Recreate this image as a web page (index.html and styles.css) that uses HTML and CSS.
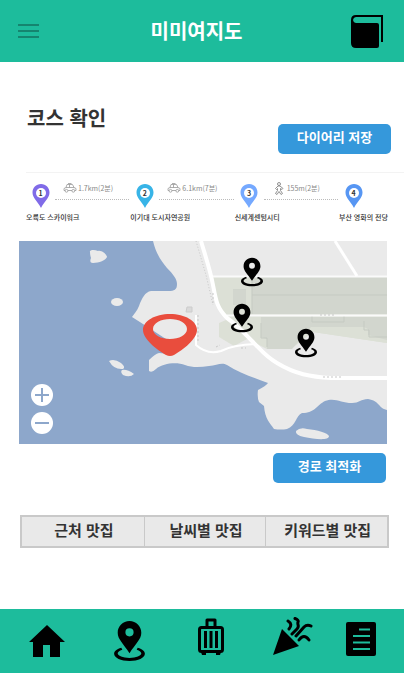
FILE: index.html
```html
<!DOCTYPE html>
<html lang="ko">
<head>
<meta charset="utf-8">
<meta name="viewport" content="width=device-width, initial-scale=1">
<title>미미여지도</title>
<link rel="stylesheet" href="styles.css">
</head>
<body>
<svg class="defs" aria-hidden="true">
  <symbol id="place" viewBox="0 0 30 39">
    <path fill-rule="evenodd" d="M15 0C8.500 0 3.500 5 3.500 11.500C3.500 18 9 22 15 31.500C21 22 26.500 18 26.500 11.500C26.500 5 21.500 0 15 0ZM15 7A4 4 0 1 1 15 15A4 4 0 1 1 15 7Z"/>
    <path d="M7 26C2 27.500 0 29.500 0 32C0 36 6.500 39 15 39S30 36 30 32C30 29.500 28 27.500 23 26L22 28C25 29 26.500 30.500 26.500 31.500C26.500 34 21.500 36 15 36S3.500 34 3.500 31.500C3.500 30.500 5 29 8 28Z"/>
  </symbol>
  <symbol id="drop" viewBox="0 0 18 24">
    <path d="M9 0C4 0 .5 3.800.5 8.500C.5 14 5.500 17 9 24C12.500 17 17.500 14 17.500 8.500C17.500 3.800 14 0 9 0Z"/>
    <circle cx="9" cy="9" r="5" fill="#fff"/>
  </symbol>
  <symbol id="car" viewBox="0 0 14 10">
    <path d="M1 7.500V5.500L3 4.500L4 1.500H9.500L11 4.500L13 5.500V7.500H11.500M9 7.500H5M2.500 7.500H1M3 4.500H11M6.500 1.500V4.500M5 .5H8.500" fill="none" stroke="#999" stroke-width=".8"/>
    <circle cx="3.500" cy="7.800" r="1.400" fill="#fff" stroke="#999" stroke-width=".8"/>
    <circle cx="10.300" cy="7.800" r="1.400" fill="#fff" stroke="#999" stroke-width=".8"/>
  </symbol>
  <symbol id="walk" viewBox="0 0 10 13">
    <circle cx="5" cy="2" r="1.500" fill="#fff" stroke="#777" stroke-width=".8"/>
    <path d="M4 4L1.500 6.500L2.500 7.500L3.500 6.500V8.500L1.500 11.500L3 12.500L5 9.500L7 12.500L8.500 11.500L6.500 8.500V6.500L8 7.500L9 6.500L6 4Z" fill="#fff" stroke="#777" stroke-width=".8"/>
  </symbol>
</svg>

<header class="topbar">
  <button class="icon-btn" aria-label="메뉴">
    <svg width="21" height="14" viewBox="0 0 21 14"><path d="M0 1H21M0 7H21M0 13H21" stroke="#15856f" stroke-width="2"/></svg>
  </button>
  <h1 class="brand">미미여지도</h1>
  <button class="icon-btn" aria-label="다이어리">
    <svg width="32" height="33" viewBox="0 0 32 33">
      <path d="M5 0H32V27H30V2H5.500C1 2 1 8 5.500 8H26Q28 8 28 10V31Q28 33 26 33H5Q0 33 0 28V5Q0 0 5 0Z"/>
    </svg>
  </button>
</header>

<main class="content">
  <section class="heading">
    <h2 class="title">코스 확인</h2>
    <button class="action">다이어리 저장</button>
  </section>

  <ol class="route">
    <li class="stop violet">
      <span class="marker"><svg width="18" height="24"><use href="#drop"/></svg><b class="num">1</b></span>
      <span class="leg"><svg width="14" height="10"><use href="#car"/></svg>1.7km(2분)</span>
      <span class="name">오륙도 스카이워크</span>
    </li>
    <li class="stop cyan">
      <span class="marker"><svg width="18" height="24"><use href="#drop"/></svg><b class="num">2</b></span>
      <span class="leg"><svg width="14" height="10"><use href="#car"/></svg>6.1km(7분)</span>
      <span class="name">이기대 도시자연공원</span>
    </li>
    <li class="stop sky">
      <span class="marker"><svg width="18" height="24"><use href="#drop"/></svg><b class="num">3</b></span>
      <span class="leg walk"><svg width="10" height="13"><use href="#walk"/></svg>155m(2분)</span>
      <span class="name">신세계센텀시티</span>
    </li>
    <li class="stop blue">
      <span class="marker"><svg width="18" height="24"><use href="#drop"/></svg><b class="num">4</b></span>
      <span class="name">부산 영화의 전당</span>
    </li>
  </ol>

  <div class="map">
    <svg class="map-art" viewBox="0 0 368 203" role="img" aria-label="지도">
      <rect width="368" height="203" fill="#8da7cb"/>
      <g fill="#eaeaea">
        <path d="M134 0C137 13 143 21 148 27C154 33 158 38 158 43C158 49 155 50 150 50H132C126 51 123 57 120 65C118 70 115 73 113 76L124 83L150 100V113L140 112Q136 113 130 119V130Q133 132 137 128C144 122 158 121 166 124C174 127 182 126 190 125C198 124 203 121 208 124C220 132 236 137 249 142Q247 145 239 149Q238 156 240 161L245 165C246 178 251 182 255 188Q262 189 268 188C277 185 277 174 283 172C296 172 298 164 306 160C316 156 322 162 333 162C340 162 342 158 349 158C361 160 359 167 368 169V0Z"/>
        <path d="M71 11C70 9 75 8 79 10C83 9 88 14 88 16C87 19 80 22 74 22Q70 22 72 17Q71 14 71 11Z"/>
        <ellipse cx="98" cy="61" rx="6" ry="4"/>
        <path d="M90 120Q95 117 102 122Q107 126 104 128Q95 129 90 120ZM103 129Q108 128 115 133Q111 137 104 134Q101 131 103 129Z"/>
        <path d="M277 190Q281 186 288 188C298 189 309 192 310 195C310 200 295 198 285 196Q276 194 277 190Z"/>
      </g>
      <path d="M194 36H368V102L294 91L272 108H248L228 98L215 105L200 96V82L207 79L198 66Z" fill="#dce0d6"/>
      <path d="M330 79H368V102L294 91Z" fill="#dce0d6"/>
      <path d="M233 36H368V73H233ZM242 76H368V99L349 94V88L345 86H292L273 108H248V98L242 96Z" fill="#d2d6ce"/>
      <path d="M233 54H368M233 36V73M214 49H227M293 75V81H325V75M242 82V97H248V106M345 80V89H350V96H368" fill="none" stroke="#c5cac2"/>
      <path d="M214 49H227V64H214Z" fill="#d2d6ce"/>
      <path d="M194 35.500H368M208 74.500H368" stroke="#fafafa" stroke-width="2"/>
      <path d="M316 0L338 35" stroke="#fff" stroke-width="3"/>
      <path d="M177 0L187 34L194 64" fill="none" stroke="#c9c9c9" stroke-width="1" stroke-dasharray="1 2"/>
      <path d="M182 0C186 14 191 28 194 44S198 67 208 77C218 84 225 92 233 100C242 109 247 116 258 122C276 133 292 136 312 137H368" fill="none" stroke="#fff" stroke-width="4"/>
      <path d="M177 74V104Q188 114 202 110Q213 104 237 103" fill="none" stroke="#fff" stroke-width="2"/>
      <path d="M179 74V101M304 136H322M301 74H315M194 52V64M197 106L201 104M222 107H227" fill="none" stroke="#c7c7c7" stroke-dasharray="2 2"/>
      <path d="M168 66H173V71H167Z" fill="#dadada" stroke="#ccc"/>
      <path fill="#e94d3d" fill-rule="evenodd" d="M151 73C136 73 124 80 124 89C124 98 138 109 147 114Q151 116 155 114C164 109 178 98 178 89C178 80 166 73 151 73ZM151 78C160 78 168 82 168 88S160 98 151 98S134 94 134 88S142 78 151 78Z"/>
      <use href="#place" x="222" y="16" width="22" height="30"/>
      <use href="#place" x="212" y="62" width="22" height="30"/>
      <use href="#place" x="276" y="87" width="22" height="30"/>
    </svg>
    <div class="zoom">
      <button class="zoom-btn" aria-label="확대"><svg width="14" height="14"><path d="M0 7H14M7 0V14"/></svg></button>
      <button class="zoom-btn" aria-label="축소"><svg width="14" height="14"><path d="M0 7H14"/></svg></button>
    </div>
  </div>

  <div class="optimize"><button class="action">경로 최적화</button></div>

  <div class="tabs">
    <button class="tab">근처 맛집</button>
    <button class="tab">날씨별 맛집</button>
    <button class="tab">키워드별 맛집</button>
  </div>
</main>

<nav class="bottombar">
  <a href="#home" aria-label="홈"><svg width="38" height="33" viewBox="0 0 38 33"><path d="M19 0L37 17H32V32H22V20H15V32H5V17H1Z"/></svg></a>
  <a href="#places" aria-label="장소"><svg width="31" height="40"><use href="#place"/></svg></a>
  <a href="#trips" aria-label="여행"><svg width="28" height="46" viewBox="0 0 28 46">
    <path d="M10 9V2H18V9" fill="none" stroke="#000" stroke-width="3" stroke-linejoin="round"/>
    <rect x="2.500" y="9.500" width="23" height="24" rx="2" fill="none" stroke="#000" stroke-width="3"/>
    <path d="M8.500 13V30M14 13V30M19.500 13V30" stroke="#000" stroke-width="3"/>
    <path d="M4 34H9V37H5ZM19 34H24L23 37H19Z"/>
  </svg></a>
  <a href="#events" aria-label="축제"><svg width="40" height="48" viewBox="0 0 40 48">
    <path d="M9 12L26 29L0 38Z"/>
    <path d="M15 4Q20 7 16 12M22 1.500Q26 3 25 5C24 8 27 9 24 12L19 17M23 19L31 10Q34 7 38 9M26 23Q31 16 36 23" fill="none" stroke="#000" stroke-width="3" stroke-linecap="round"/>
  </svg></a>
  <a href="#notes" aria-label="기록"><svg width="30" height="38" viewBox="0 0 30 38">
    <rect width="30" height="34" rx="2"/>
    <path d="M13 7.500H24M7 14H24M7 20.500H24M7 27H24" stroke="#1dbc9c" stroke-width="2"/>
  </svg></a>
</nav>
</body>
</html>
```
FILE: styles.css
```css
* {
  box-sizing: border-box;
}

body {
  margin: 0;
  min-height: 100vh;
  display: flex;
  flex-direction: column;
  background: #fff;
  color: #333;
  font-family: "Noto Sans CJK KR", sans-serif;
}

button {
  padding: 0;
  border: 0;
  background: none;
  font: inherit;
  color: inherit;
}

svg {
  display: block;
}

.defs {
  position: absolute;
  width: 0;
  height: 0;
}

.topbar {
  display: grid;
  grid-template-columns: 40px 1fr 40px;
  align-items: center;
  height: 62px;
  padding: 0 17px 0 18px;
  background: #1dbc9c;
}

.icon-btn:last-child {
  justify-self: center;
}

.brand {
  margin: 0;
  padding-right: 12px;
  color: #fff;
  font-size: 20px;
  font-weight: 700;
  line-height: 28px;
  text-align: center;
}

.content {
  flex: 1;
}

.heading {
  display: flex;
  justify-content: space-between;
  align-items: flex-end;
  height: 92px;
  padding: 0 13px 0 27px;
}

.title {
  margin: 0 0 20px;
  font-size: 20px;
  font-weight: 700;
  line-height: 32px;
}

.action {
  width: 113px;
  height: 30px;
  padding-bottom: 4px;
  border-radius: 5px;
  background: #3598db;
  color: #fff;
  font-size: 13px;
  font-weight: 700;
  line-height: 20px;
}

.route {
  display: grid;
  grid-template-columns: repeat(3, 1fr) 50px;
  margin: 18px 0 0 26px;
  padding: 11px 15px 0 0;
  border-top: 1px solid #f3f3f3;
  list-style: none;
}

.stop {
  display: grid;
  grid-template-columns: 29px 1fr;
  row-gap: 4px;
  font-size: 7px;
  line-height: 10px;
}

.marker {
  display: grid;
  justify-items: center;
}

.marker > * {
  grid-area: 1 / 1;
}

.num {
  line-height: 18px;
}

.violet { fill: #806be8; }
.cyan { fill: #38b4e7; }
.sky { fill: #75a9ff; }
.blue { fill: #5796f3; }

.leg {
  display: flex;
  align-items: center;
  gap: 1px;
  height: 16px;
  margin-right: 1px;
  padding: 0 0 7px 8px;
  border-bottom: 1px dotted #bbb;
  color: #888;
}

.walk {
  gap: 3px;
  padding-left: 10px;
}

.name {
  grid-column: 1 / -1;
  white-space: nowrap;
  font-weight: 500;
}

.map {
  position: relative;
  margin: 19px 17px 0 19px;
}

.map-art {
  width: 100%;
  height: auto;
}

.zoom {
  position: absolute;
  left: 12px;
  bottom: 10px;
  display: grid;
  gap: 6px;
}

.zoom-btn {
  display: grid;
  place-items: center;
  width: 22px;
  height: 22px;
  border-radius: 50%;
  background: #fff;
  stroke: #8da7cb;
  stroke-width: 2px;
}

.optimize {
  display: flex;
  justify-content: flex-end;
  padding: 9px 18px 0 0;
}

.tabs {
  display: grid;
  grid-template-columns: repeat(3, 1fr);
  margin: 32px 15px 20px 20px;
  border: 2px solid #c9c9c9;
  background: #e9e9e9;
}

.tab {
  height: 29px;
  padding: 0 0 3px 2px;
  font-size: 15px;
  font-weight: 700;
  line-height: 24px;
}

.tab + .tab {
  border-left: 1px solid #c9c9c9;
}

.bottombar {
  display: grid;
  grid-template-columns: repeat(4, 1fr) 42px;
  justify-items: center;
  align-items: center;
  height: 64px;
  padding: 0 28px 0 6px;
  background: #1dbc9c;
}

.bottombar a:last-child {
  justify-self: end;
}
```
